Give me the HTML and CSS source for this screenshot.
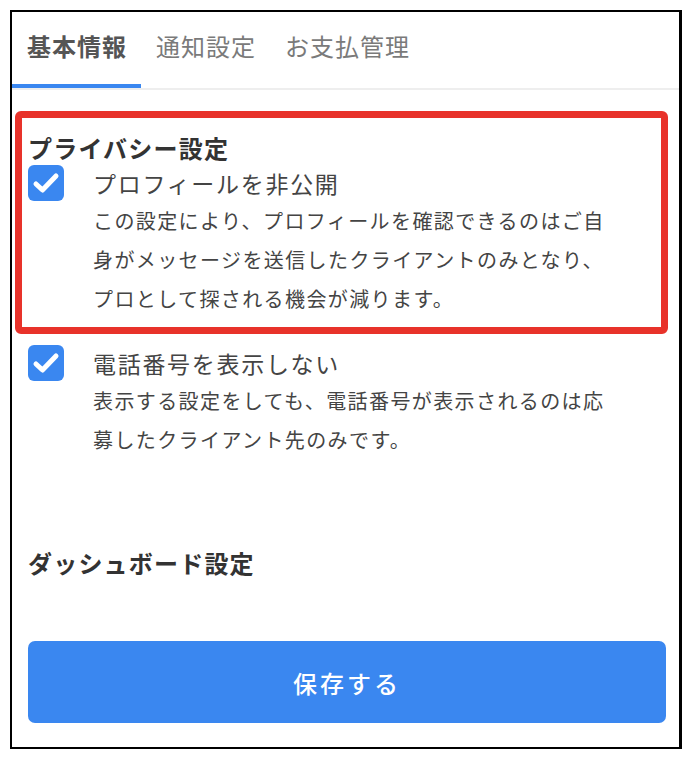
FILE: index.html
```html
<!DOCTYPE html>
<html lang="ja">
<head>
<meta charset="utf-8">
<title>設定</title>
<link rel="stylesheet" href="styles.css">
</head>
<body>
<div class="frame">
  <nav class="tabs">
    <div class="tab active">基本情報</div>
    <div class="tab">通知設定</div>
    <div class="tab">お支払管理</div>
  </nav>
  <main class="content">
    <section class="highlight">
      <h2 class="heading">プライバシー設定</h2>
      <div class="item">
        <span class="checkbox"><svg viewBox="0 0 36 36" width="36" height="36"><path d="M8 19 L14.5 25 L28 11" fill="none" stroke="#fff" stroke-width="5" stroke-linecap="round" stroke-linejoin="round"/></svg></span>
        <div class="item-text">
          <div class="label">プロフィールを非公開</div>
          <p class="desc">この設定により、プロフィールを確認できるのはご自身がメッセージを送信したクライアントのみとなり、プロとして探される機会が減ります。</p>
        </div>
      </div>
    </section>
    <div class="item item-second">
      <span class="checkbox"><svg viewBox="0 0 36 36" width="36" height="36"><path d="M8 19 L14.5 25 L28 11" fill="none" stroke="#fff" stroke-width="5" stroke-linecap="round" stroke-linejoin="round"/></svg></span>
      <div class="item-text">
        <div class="label">電話番号を表示しない</div>
        <p class="desc">表示する設定をしても、電話番号が表示されるのは応募したクライアント先のみです。</p>
      </div>
    </div>
    <h2 class="heading heading-dash">ダッシュボード設定</h2>
    <button class="save" type="button">保存する</button>
  </main>
</div>
</body>
</html>
```

FILE: styles.css
```css
* { box-sizing: border-box; }

html, body {
  margin: 0;
  padding: 0;
  background: #fff;
}

body {
  font-family: "Noto Sans CJK JP", "Noto Sans", sans-serif;
  color: #333;
}

.frame {
  margin: 10px 0 0 10px;
  width: 672px;
  height: 739px;
  border: 2px solid #000;
  border-right-width: 3px;
  background: #fff;
}

.tabs {
  display: flex;
  height: 78px;
  border-bottom: 2px solid #eeeeee;
}

.tab {
  display: flex;
  align-items: center;
  padding: 0 14px 8px 15px;
  font-size: 24px;
  letter-spacing: 1px;
  color: #7a7a7a;
  line-height: 1;
}

.tab.active {
  color: #555;
  font-weight: bold;
  box-shadow: inset 0 -4px 0 #3a87f0;
}

.content {
  padding: 21px 13px 0 16px;
}

.highlight {
  margin: 0 -2px 0 -13px;
  border: 7px solid #e8322a;
  border-radius: 6px;
  padding: 13px 0 9px 6px;
}

.heading {
  margin: 0;
  font-size: 24px;
  letter-spacing: 1.2px;
  line-height: 34px;
  font-weight: bold;
  color: #333;
}

.item {
  display: flex;
  gap: 29px;
}

.item-second {
  margin-top: 11px;
}

.checkbox {
  flex: none;
  width: 36px;
  height: 36px;
  border-radius: 6px;
  background: #3a87f0;
  display: flex;
}

.item-text {
  flex: 1;
}

.label {
  font-size: 23px;
  letter-spacing: 1.7px;
  line-height: 36px;
  color: #444;
}

.desc {
  margin: 0;
  max-width: 525px;
  font-size: 20px;
  letter-spacing: 1.4px;
  line-height: 39px;
  color: #444;
}

.heading-dash {
  margin-top: 87px;
}

.save {
  display: block;
  width: 100%;
  height: 82px;
  margin-top: 61px;
  border: none;
  border-radius: 7px;
  background: #3a87f0;
  color: #fff;
  font-family: inherit;
  font-size: 24px;
  font-weight: 500;
  letter-spacing: 3px;
}
```
